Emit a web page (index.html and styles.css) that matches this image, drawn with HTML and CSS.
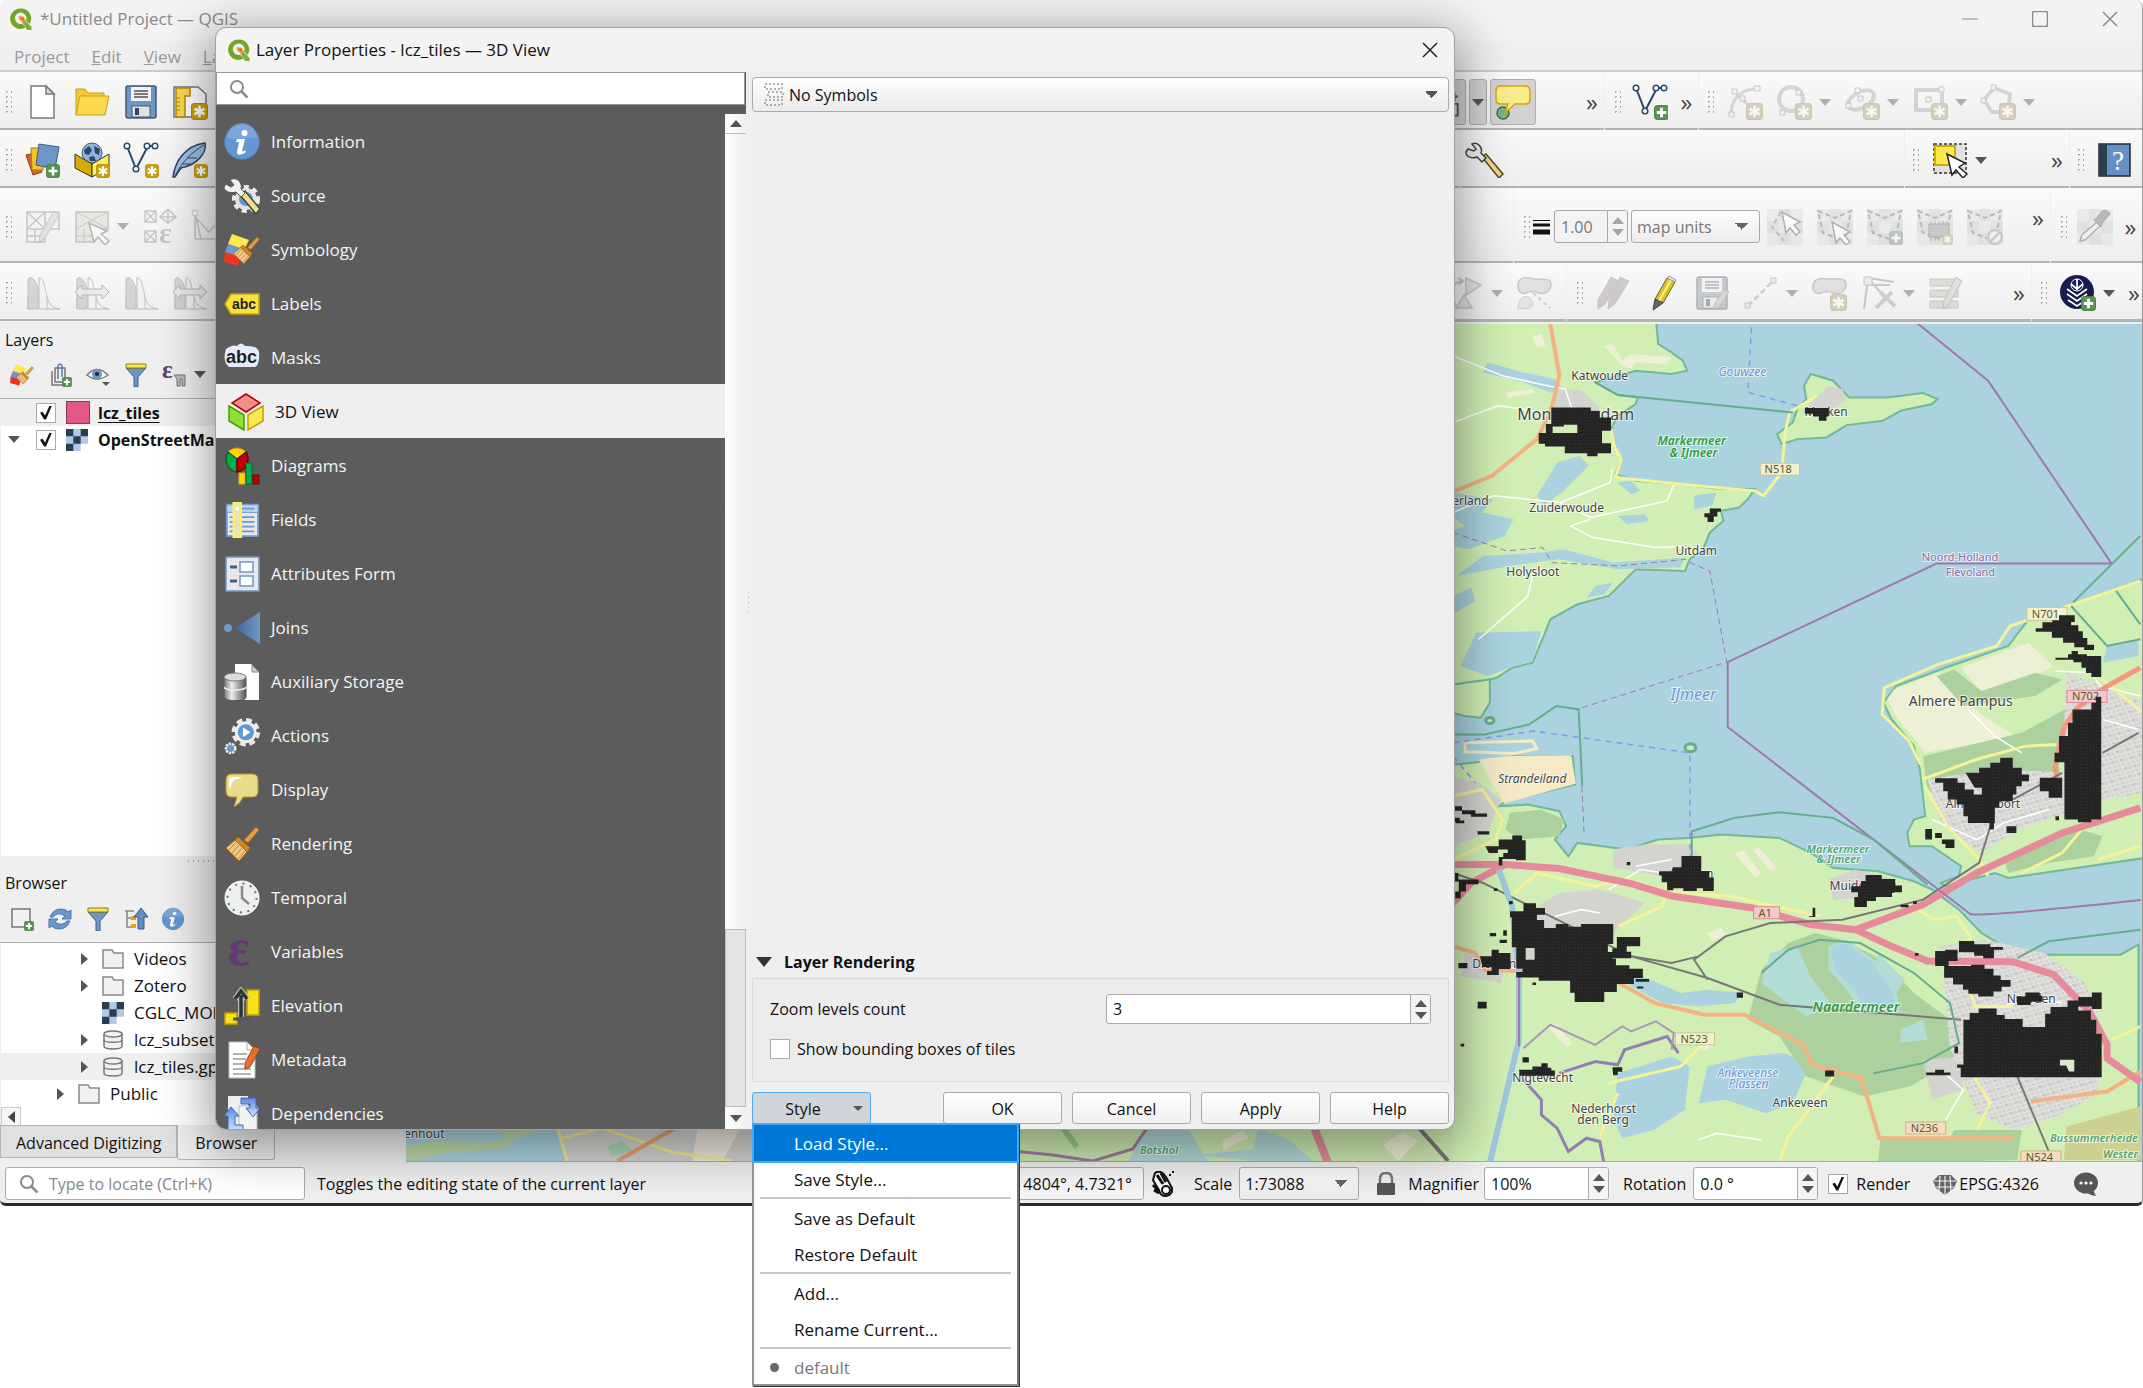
FILE: index.html
```html
<!DOCTYPE html>
<html lang="en">
<head>
<meta charset="utf-8">
<title>Layer Properties</title>
<link rel="stylesheet" href="styles.css">
</head>
<body>
<svg class="sprite" aria-hidden="true">
  <defs>
    <linearGradient id="gJoin" x1="0" y1="0" x2="1" y2="0"><stop offset="0" stop-color="#3d6691"/><stop offset="1" stop-color="#6d97c8"/></linearGradient>
    <linearGradient id="gCyl" x1="0" y1="0" x2="1" y2="0"><stop offset="0" stop-color="#777"/><stop offset=".35" stop-color="#eee"/><stop offset="1" stop-color="#555"/></linearGradient>
    <linearGradient id="gArrow" x1="0" y1="0" x2="0" y2="1"><stop offset="0" stop-color="#5b8be0"/><stop offset="1" stop-color="#d5e4ff"/></linearGradient>
    <pattern id="tiles" width="7" height="10" patternUnits="userSpaceOnUse"><rect width="7" height="10" fill="#232323"/><rect x="3" y="4" width="2" height="2" fill="#484848"/></pattern>
    <pattern id="fieldlines" width="46" height="60" patternUnits="userSpaceOnUse" patternTransform="rotate(24)"><path d="M0 8h46M0 38h46M12 8v30M34 38v30" stroke="#b9dcae" stroke-width="1" fill="none"/><rect x="20" y="14" width="5" height="16" fill="#e2edc6"/></pattern>
    <pattern id="blocks" width="22" height="26" patternUnits="userSpaceOnUse" patternTransform="rotate(-20)"><path d="M0 3h22M5 0v26M0 15h22M16 3v12" stroke="#ececec" stroke-width="2" fill="none"/><rect x="7" y="18" width="6" height="4" fill="#bcbcb8"/></pattern>
  </defs>
  <symbol id="qgis" viewBox="0 0 24 24"><path d="M11.500 1.500a10.200 10.200 0 1 0 5 19l-3.200-3.700a5.800 5.800 0 1 1 3.800-3.500l3.500 3.800A10.200 10.200 0 0 0 11.500 1.500z" fill="#73a52b"/><path d="M12 13l3-1 7.500 8V23h-4.500z" fill="#7fb03a"/><path d="M9.500 9l5 .5 2.500 4-3 2-4-3z" fill="#f0a030"/><path d="M11 10.500l4 .5-.5 3z" fill="#ee5a24"/></symbol>
  <symbol id="star" viewBox="0 0 16 16"><rect x=".5" y=".5" width="15" height="15" rx="3" fill="#c9a20c" stroke="#b28d05"/><path d="M8 2.500v11M3.200 5.200l9.600 5.600M12.800 5.200l-9.600 5.600" stroke="#fff" stroke-width="2.400"/></symbol>
  <symbol id="plus" viewBox="0 0 16 16"><rect x=".5" y=".5" width="15" height="15" rx="3" fill="#589353" stroke="#45803f"/><path d="M8 3v10M3 8h10" stroke="#fff" stroke-width="3"/></symbol>
  <symbol id="new" viewBox="0 0 36 36"><path d="M6 2h15l8 8v24H6z" fill="#fff" stroke="#7a7a7a" stroke-width="1.500"/><path d="M21 2v8h8z" fill="#ddd" stroke="#7a7a7a" stroke-width="1.500"/></symbol>
  <symbol id="open" viewBox="0 0 36 36"><path d="M2 5h9l3 4h16v5H8L2 30z" fill="#f5c83c" stroke="#c9a20c"/><path d="M6 12h29l-4 19H2z" fill="#fcd94f" stroke="#c9a20c"/></symbol>
  <symbol id="save" viewBox="0 0 36 36"><rect x="3" y="2" width="30" height="32" rx="2" fill="#6d97c8" stroke="#415a75" stroke-width="1.500"/><rect x="8" y="3" width="20" height="14" fill="#f2f2f2"/><path d="M11 7h14M11 10h14M11 13h14" stroke="#555" stroke-width="1.300"/><rect x="9" y="22" width="18" height="11" fill="#e2e2e2" stroke="#415a75"/><rect x="12" y="24" width="4" height="7" fill="#2d4766"/></symbol>
  <symbol id="layout" viewBox="0 0 36 36"><path d="M2 3h24l8 7v23H2z" fill="#fff" stroke="#777" stroke-width="1.500"/><path d="M4 4h14v8h-5v21H4z" fill="#fcd94f" stroke="#b28d05" stroke-width="1.500"/><path d="M4 14h4M4 18h4M4 22h4M4 26h4" stroke="#b28d05"/><use href="#star" x="19" y="19" width="17" height="17"/></symbol>
  <symbol id="dsm" viewBox="0 0 36 36"><path d="M1 13l9-2 7 19-9 3z" fill="#d8602c" stroke="#8e3d18"/><path d="M6 6h14l-2 22H7z" fill="#f3c62c" stroke="#a58309"/><path d="M14 2l20 3-4 22-19-4z" fill="#6d97c8" stroke="#3d5b80"/><use href="#plus" x="21" y="22" width="14" height="14"/></symbol>
  <symbol id="gpkg" viewBox="0 0 36 36"><circle cx="18" cy="11" r="10" fill="#8fb4dd" stroke="#415a75"/><path d="M10 8l5-4 3 4-3 5-4-1zM20 4l6 3-1 6-4-2zM15 15l5-1 2 5h-6z" fill="#2d4766"/><path d="M1 12l17 10v13L1 26z" fill="#d9ab00" stroke="#333"/><path d="M18 22l17-10v13L18 35z" fill="#ffef5a" stroke="#333"/><use href="#star" x="22" y="22" width="14" height="14"/></symbol>
  <symbol id="vee" viewBox="0 0 36 36"><path d="M4 4l9 23L25 4h7" fill="none" stroke="#2b4a66" stroke-width="2"/><g fill="#fff" stroke="#2b4a66" stroke-width="1.500"><circle cx="4" cy="4" r="2.800"/><circle cx="13" cy="27" r="2.800"/><circle cx="24" cy="4" r="2.800"/><circle cx="32" cy="4" r="2.800"/></g></symbol>
  <symbol id="veestar" viewBox="0 0 36 36"><use href="#vee"/><use href="#star" x="22" y="22" width="14" height="14"/></symbol>
  <symbol id="veeplus" viewBox="0 0 36 36"><use href="#vee"/><use href="#plus" x="22" y="21" width="15" height="15"/></symbol>
  <symbol id="feather" viewBox="0 0 36 36"><path d="M1 35C3 20 12 4 33 1c2 10-8 22-24 25l-6 9z" fill="#9cc0e6" stroke="#2d4766" stroke-width="1.500"/><path d="M3 34C10 20 20 10 32 3M11 22h8M15 16h10" stroke="#2d4766" fill="none"/><use href="#star" x="22" y="22" width="14" height="14"/></symbol>
  <symbol id="meshpen" viewBox="0 0 36 36"><g fill="#f1f1e8" stroke="#888" stroke-width="1.500"><path d="M2 3h32v17H20v13H2zM2 20h18V3M2 3l18 17M20 3L2 20M2 27h18M10 20v13"/></g><path d="M29 2l5 4-14 23-6 5 1-8z" fill="#d5c5c0" stroke="#888"/></symbol>
  <symbol id="meshsel" viewBox="0 0 36 36"><path d="M2 3h32v17H20v13H2z" fill="#dcd8b4" stroke="#888" stroke-width="1.500"/><path d="M2 3l16 8L34 3M2 20l16-9 16 9M2 27h18M10 20v13" fill="none" stroke="#888"/><path d="M15 14l5 19 4-5 7 8 4-4-8-7 6-3z" fill="#fff" stroke="#666" stroke-width="1.500"/></symbol>
  <symbol id="meshv" viewBox="0 0 36 36"><path d="M4 4l6 26h18L34 4M4 30h28V8M4 30V8l14 15L32 8" fill="none" stroke="#888" stroke-width="1.500"/><circle cx="4" cy="4" r="3" fill="#fff" stroke="#888"/></symbol>
  <symbol id="hist" viewBox="0 0 36 36"><path d="M3 34V4c3-4 9 2 10 12v18z" fill="#9db49a" stroke="#777"/><path d="M14 34V3c5-2 6 13 9 22 2 6 6 8 12 9z" fill="#f2f2f2" stroke="#777"/><path d="M3 22v12M22 22v12" stroke="#c66"/></symbol>
  <symbol id="histarrow" viewBox="0 0 36 36"><use href="#hist"/><path d="M1 17l7-7v4h20v-4l7 7-7 7v-4H8v4z" fill="#ddd" stroke="#666"/></symbol>
  <symbol id="labelt" viewBox="0 0 22 36"><path d="M0 12h14M10 7v10" stroke="#3c6b9a" stroke-width="3"/><path d="M0 20h14v13H0M4 24h6M4 29h6" fill="none" stroke="#555" stroke-width="2"/></symbol>
  <symbol id="tip" viewBox="0 0 36 36"><circle cx="8" cy="29" r="6" fill="#78b47a" stroke="#3b6e44" stroke-width="1.500"/><path d="M6 2h24q5 0 5 5v8q0 5-5 5H20L10 29l3-9H6q-5 0-5-5V7q0-5 5-5z" fill="#faec8d" stroke="#cfa80c" stroke-width="1.500"/></symbol>
  <symbol id="arc" viewBox="0 0 36 36"><path d="M4 31C4 14 14 5 30 5M8 8l12 12" fill="none" stroke="#aaa" stroke-width="3"/><g fill="#eee" stroke="#888"><path d="M2 28h5v5H2zM5 5h5v5H5zM27 2h6v5h-6zM13 12h5v5h-5z"/></g><use href="#star" x="19" y="19" width="17" height="17"/></symbol>
  <symbol id="circ" viewBox="0 0 36 36"><ellipse cx="15" cy="15" rx="12" ry="12" fill="none" stroke="#aaa" stroke-width="4"/><path d="M20 6h5v5h-5zM4 26h5v5H4z" fill="#eee" stroke="#888"/><use href="#star" x="19" y="19" width="17" height="17"/></symbol>
  <symbol id="elli" viewBox="0 0 36 36"><ellipse cx="17" cy="16" rx="14" ry="8" transform="rotate(-28 17 16)" fill="none" stroke="#aaa" stroke-width="4"/><path d="M11 4h5v5h-5zM14 12h5v5h-5zM2 19h5v5H2z" fill="#eee" stroke="#888"/><use href="#star" x="19" y="19" width="17" height="17"/></symbol>
  <symbol id="rect" viewBox="0 0 36 36"><path d="M4 6h26v20H4z" fill="none" stroke="#aaa" stroke-width="4"/><path d="M14 13h5v5h-5zM27 3h5v5h-5z" fill="#eee" stroke="#888"/><use href="#star" x="19" y="19" width="17" height="17"/></symbol>
  <symbol id="poly" viewBox="0 0 36 36"><path d="M14 4l16 6-2 18H12L4 16z" fill="none" stroke="#aaa" stroke-width="4"/><path d="M11 1h5v5h-5zM1 14h5v5H1z" fill="#eee" stroke="#888"/><use href="#star" x="19" y="19" width="17" height="17"/></symbol>
  <symbol id="wrench" viewBox="0 0 40 36"><path d="M17 15l4-3 17 20-4 4z" fill="#f4d97c" stroke="#4a4a33" stroke-width="1.500"/><path d="M1 10l2-3 6 2 2-2-4-5c6-3 11 4 9 9l5 5-4 4-5-5C7 17 1 15 1 10z" fill="#eee" stroke="#444" stroke-width="1.500"/></symbol>
  <symbol id="select" viewBox="0 0 36 36"><rect x="2" y="2" width="32" height="29" fill="#e2e2e2" stroke="#333" stroke-width="1.500" stroke-dasharray="3 2"/><rect x="3" y="4" width="20" height="19" fill="#fce94f" stroke="#cfa80c" stroke-width="2"/><path d="M15 12l5 21 4-5 7 8 4-4-8-7 6-4z" fill="#fff" stroke="#222" stroke-width="1.500"/></symbol>
  <symbol id="width" viewBox="0 0 18 16"><path d="M0 1.500h17" stroke="#111"/><path d="M0 6h17" stroke="#111" stroke-width="3"/><path d="M0 13h17" stroke="#111" stroke-width="5"/></symbol>
  <symbol id="cells" viewBox="0 0 36 36"><path d="M0 0h36v36H0z" fill="#d8dcd9"/><path d="M12 0h12v12H12zM0 12h12v12H0zM24 12h12v12H24zM12 24h12v12H12z" fill="#c4c9c6"/></symbol>
  <symbol id="sk1" viewBox="0 0 36 36"><use href="#cells"/><path d="M14 3L5 18l12 14" fill="none" stroke="#777" stroke-width="2" stroke-dasharray="5 3"/><path d="M15 3l4 21 4-5 6 7 4-3-6-7 6-3z" fill="#fff" stroke="#555" stroke-width="1.500"/></symbol>
  <symbol id="sk0" viewBox="0 0 36 36"><use href="#cells"/><path d="M1 2l17 7 16-7-6 30-22-8z" fill="none" stroke="#666" stroke-width="2" stroke-dasharray="5 3"/></symbol>
  <symbol id="sk2" viewBox="0 0 36 36"><use href="#sk0"/><path d="M15 13l4 21 4-5 6 7 4-3-6-7 6-3z" fill="#fff" stroke="#555" stroke-width="1.500"/></symbol>
  <symbol id="sk3" viewBox="0 0 36 36"><use href="#sk0"/><use href="#plus" x="22" y="22" width="14" height="14"/></symbol>
  <symbol id="sk4" viewBox="0 0 36 36"><use href="#sk0"/><rect x="12" y="15" width="20" height="13" fill="#8a8f98" stroke="#555"/><path d="M14 12v3M18 12v3M22 12v3M26 12v3M30 12v3M14 28v4M18 28v4M22 28v4" stroke="#555"/><use href="#star" x="25" y="25" width="11" height="11"/></symbol>
  <symbol id="sk5" viewBox="0 0 36 36"><use href="#sk0"/><circle cx="28" cy="28" r="7" fill="#eee" stroke="#c08080" stroke-width="2.500"/><path d="M24 32l8-8" stroke="#c08080" stroke-width="2.500"/></symbol>
  <symbol id="dropper" viewBox="0 0 36 36"><use href="#cells"/><path d="M3 32l2-6 15-13 3 4L8 31z" fill="#eee" stroke="#555" stroke-width="1.500"/><path d="M17 11l3-2 5-7q6-2 8 3l-7 8-2 5z" fill="#666" stroke="#444"/></symbol>
  <symbol id="rotate" viewBox="0 0 36 36"><path d="M18 3l15 7-15 10zM16 20l8 13H8z" fill="#ccc" stroke="#888" stroke-width="1.500"/><path d="M8 30C-1 20 3 8 14 6M10 3l5 3-4 4" fill="none" stroke="#888" stroke-width="2"/></symbol>
  <symbol id="simp" viewBox="0 0 36 36"><path d="M2 9c2-9 12-6 17-5s16-2 16 5-6 11-12 9-8-2-13 0S1 15 2 9z" fill="#c5c5c5" stroke="#888" stroke-width="1.500"/><path d="M2 34c0-10 6-14 10-12s7 8 2 11z" fill="#ddd0a8" stroke="#999"/><path d="M17 18l17 15" stroke="#999" stroke-width="2" stroke-dasharray="4 3"/></symbol>
  <symbol id="pencil" viewBox="0 0 36 36"><path d="M22 3l8 4-12 21-8-4z" fill="#ddc02c" stroke="#6b5d17"/><path d="M26 5L14 26" stroke="#fff28a" stroke-width="2"/><path d="M22 3l2-2 7 4-1 2z" fill="#eee" stroke="#999"/><path d="M10 24l8 4-10 7z" fill="#666" stroke="#444"/></symbol>
  <symbol id="pencils" viewBox="0 0 36 36"><path d="M15 2l8 4L9 29l-7 5v-9zM24 2l9 4-14 23-7 5 1-9z" fill="#a48f88" stroke="#887"/></symbol>
  <symbol id="savepen" viewBox="0 0 36 36"><use href="#save"/><path d="M30 14l5 3-9 14-6 4 1-7z" fill="#c5a99a" stroke="#777"/></symbol>
  <symbol id="seg" viewBox="0 0 36 36"><path d="M5 31L30 6" stroke="#999" stroke-width="2.500" stroke-dasharray="6 3"/><path d="M2 28h5v5H2zM28 3h5v5h-5z" fill="#ddd" stroke="#888"/></symbol>
  <symbol id="blob" viewBox="0 0 36 36"><path d="M2 10c2-9 12-6 17-6s16-2 16 5-6 11-12 9-8-2-13 0S1 16 2 10z" fill="#bfc5bd" stroke="#888" stroke-width="1.500"/><use href="#star" x="19" y="19" width="17" height="17"/></symbol>
  <symbol id="vtool" viewBox="0 0 36 36"><path d="M4 34L8 3l26 4M8 3l12 14M8 10h22" fill="none" stroke="#888" stroke-width="2"/><path d="M4 2h8v8H4z" fill="#ddd" stroke="#888"/><path d="M16 33l16-16M20 17l15 14" stroke="#a89c78" stroke-width="4"/></symbol>
  <symbol id="tabpen" viewBox="0 0 36 36"><path d="M2 4h28v7H2zM2 15h28v7H2zM2 26h28v7H2z" fill="#c8bc8c" stroke="#888"/><path d="M28 2l6 4-13 23-6 5 1-8z" fill="#ccc0bb" stroke="#777"/></symbol>
  <symbol id="merg" viewBox="0 0 36 36"><ellipse cx="17" cy="17" rx="17" ry="17" fill="#171b4f"/><path d="M17 4v11M11 9l6 5 6-5M7 14l10 7 10-7M7 19l10 7 10-7M8 25l9 6 9-6" fill="none" stroke="#fff" stroke-width="1.800"/><circle cx="17" cy="10" r="6" fill="none" stroke="#fff"/><use href="#plus" x="21" y="21" width="15" height="15"/></symbol>
  <symbol id="info" viewBox="0 0 36 36"><circle cx="18" cy="18" r="17.500" fill="#6397d0" stroke="#4878b0"/><path d="M3 14a15 15 0 0 1 30 0C23 12 12 17 3 14z" fill="#8ab4e2" opacity=".6"/><circle cx="20.500" cy="9" r="3" fill="#fff"/><path d="M13 15h8l-3 12q1 1 4-1l-1 3q-8 4-8-1l2-10h-3z" fill="#fff"/></symbol>
  <symbol id="source" viewBox="0 0 36 36"><circle cx="22" cy="21" r="9" fill="#6397d0" stroke="#e2e2e2" stroke-width="4"/><circle cx="22" cy="21" r="12" fill="none" stroke="#ececec" stroke-width="4" stroke-dasharray="5 4"/><path d="M16 17l5-4 15 18-4 5z" fill="#f1dc8f" stroke="#4a4a33" stroke-width="1.500"/><path d="M0 9l2-3 5 3 3-2-4-5c6-4 13 2 11 9l4 4-4 4-5-5C6 16 0 13 0 9z" fill="#f0f0f0" stroke="#555"/></symbol>
  <symbol id="brush" viewBox="0 0 36 36"><path d="M32 1l3 3-11 13-4-3z" fill="#e0a04a" stroke="#a76a12"/><path d="M14 11l12 11-3 4L11 14z" fill="#d2862a" stroke="#a76a12"/><path d="M11 14l12 12-8 9L2 22z" fill="#f0c88c" stroke="#a76a12"/><path d="M12 16L5 24M15 19l-7 8M18 22l-7 8M21 25l-7 8" stroke="#bb7f30"/></symbol>
  <symbol id="symb" viewBox="0 0 36 36"><path d="M8 2l17 6-5 10L4 12z" fill="#fce94f"/><path d="M4 12l16 5-4 9L1 20z" fill="#6d97c8"/><path d="M1 20l15 5-2 9L0 30z" fill="#ee3322"/><use href="#brush" x="8" y="1" width="28" height="35"/></symbol>
  <symbol id="cube" viewBox="0 0 36 38"><path d="M18 1l14 9-14 9-14-9z" fill="#f58c8c" stroke="#b00000" stroke-width="1.500"/><path d="M1 13l15 9v15L1 28z" fill="#8ae234" stroke="#4e9a06" stroke-width="1.500"/><path d="M35 13l-15 9v15l15-9z" fill="#fce94f" stroke="#c4a000" stroke-width="1.500"/></symbol>
  <symbol id="diag" viewBox="0 0 36 38"><path d="M13 12L4 5a12 12 0 0 1 18 0z" fill="#ffd500" stroke="#c9860c"/><path d="M13 12v13A12 13 0 0 1 4 5z" fill="#00b050" stroke="#155e30" stroke-width="1.500"/><path d="M13 12v13A12 13 0 0 0 22 5z" fill="#c00000" stroke="#5e0a0a" stroke-width="1.500"/><path d="M15 26h6v11h-6z" fill="#ffd500" stroke="#f0a020"/><path d="M22 16h6v21h-6z" fill="#00b050" stroke="#155e30"/><path d="M29 28h6v9h-6z" fill="#c00000" stroke="#5e0a0a"/></symbol>
  <symbol id="fields" viewBox="0 0 36 40"><path d="M2 4h33v33H2z" fill="#e8e8e8" stroke="#6d97c8" stroke-width="2"/><path d="M2 4h33v8H2z" fill="#bad8f0" stroke="#6d97c8"/><path d="M16 8h15M5 17h26M5 22h26M5 27h26M5 32h26" stroke="#6d97c8" stroke-width="2"/><path d="M9 2h8v36H9z" fill="#ece3b4" stroke="#fdf35a" stroke-width="2"/><circle cx="13" cy="8" r="2" fill="#fff"/></symbol>
  <symbol id="form" viewBox="0 0 36 36"><path d="M2 1h33v34H2z" fill="#e8e8e8" stroke="#6d97c8" stroke-width="1.500"/><path d="M16 6h13v10H16zM16 20h13v10H16z" fill="#fff" stroke="#6d97c8" stroke-width="1.500"/><path d="M6 11h7M6 25h7" stroke="#41607f" stroke-width="3"/></symbol>
  <symbol id="joins" viewBox="0 0 36 36"><circle cx="4" cy="18" r="4" fill="#6d97c8"/><path d="M36 2v32L11 18z" fill="url(#gJoin)"/></symbol>
  <symbol id="aux" viewBox="0 0 36 38"><path d="M11 1h16l8 8v28H11z" fill="#fff"/><path d="M28 2v7h7z" fill="#ccc" stroke="#888"/><path d="M0 14v20c0 5 22 5 22 0V14z" fill="url(#gCyl)" stroke="#555"/><ellipse cx="11" cy="14" rx="11" ry="4" fill="#ddd" stroke="#777"/><path d="M0 24c1 4 21 4 22 0" fill="none" stroke="#eee" stroke-width="1.500"/></symbol>
  <symbol id="actions" viewBox="0 0 36 40"><circle cx="22" cy="16" r="12.500" fill="none" stroke="#e8e8e8" stroke-width="5" stroke-dasharray="6 3.800"/><circle cx="22" cy="16" r="10" fill="#6397d0" stroke="#eee" stroke-width="3"/><path d="M19 11v10l8-5z" fill="#fff"/><circle cx="6" cy="33" r="5" fill="#6d97c8" stroke="#eee" stroke-width="2.500" stroke-dasharray="2.500 1"/></symbol>
  <symbol id="display" viewBox="0 0 36 36"><path d="M8 2h20q6 0 6 6v11q0 6-6 6H19q-2 6-9 10l3-10H8q-6 0-6-6V8q0-6 6-6z" fill="#e8dc8a" stroke="#b89a20"/><path d="M5 16V9q0-4 4-4h9l-4 2q-6 0-7 8z" fill="#fff"/></symbol>
  <symbol id="clock" viewBox="0 0 36 36"><circle cx="18" cy="18" r="17" fill="#eff0ee" stroke="#fff" stroke-width="1"/><circle cx="18" cy="18" r="14.500" fill="none" stroke="#4b77ad" stroke-width="2" stroke-dasharray="2 5.600"/><path d="M18 6v12l7 6" fill="none" stroke="#888" stroke-width="2.500"/></symbol>
  <symbol id="elev" viewBox="0 0 36 38"><path d="M23 3h12v25H23zM1 26h12v11H1z" fill="#f7e017" stroke="#c4a000" stroke-width="1.500"/><path d="M17 30V8M11 12l6-8 6 8" fill="none" stroke="#bbb" stroke-width="6"/><path d="M17 30V8M11 12l6-8 6 8" fill="none" stroke="#2e3436" stroke-width="3.500"/><path d="M9 32h17" stroke="#555" stroke-width="3"/></symbol>
  <symbol id="meta" viewBox="0 0 36 38"><path d="M5 1h18l8 8v28H5z" fill="#fff" stroke="#bbb"/><path d="M23 1v8h8" fill="none" stroke="#aaa"/><path d="M9 13h14M9 18h13M9 23h11M9 28h18M9 33h18" stroke="#999" stroke-width="1.500"/><path d="M30 5l6 3-10 18-5 2v-6z" fill="#e8702c" stroke="#9c4412"/></symbol>
  <symbol id="deps" viewBox="0 0 36 38"><path d="M4 1h20v36H4z" fill="#eee"/><path d="M15 11h18v26H15z" fill="#f3f3f3" stroke="#bbb"/><path d="M17 3h15v10h4l-7 9-7-9h4V9h-9z" fill="url(#gArrow)" stroke="#3a66b8"/><path d="M7 12l8 9h-4v9h8v7H4V21H0z" fill="url(#gArrow)" stroke="#3a66b8"/></symbol>
  <symbol id="search" viewBox="0 0 20 20"><circle cx="8" cy="8" r="6" fill="none" stroke="#8a8a8a" stroke-width="2"/><path d="M12.500 12.500l6 6" stroke="#8a8a8a" stroke-width="2.500"/></symbol>
  <symbol id="nosym" viewBox="0 0 20 24"><path d="M1 1h17v5H1zM4 9h15v5H4zM1 17h17v5H1z" fill="none" stroke="#999" stroke-width="1.500" stroke-dasharray="2 2"/></symbol>
  <symbol id="group" viewBox="0 0 24 24"><path d="M4 8v14h12M7 5v14h10V5z" fill="none" stroke="#777" stroke-width="1.500"/><path d="M10 16V3q2-4 4 0v11" fill="none" stroke="#5d7ea8" stroke-width="1.500"/><use href="#plus" x="14" y="14" width="10" height="10"/></symbol>
  <symbol id="eye" viewBox="0 0 24 24"><path d="M1 12Q11 1 22 12 11 20 1 12z" fill="#fff" stroke="#777" stroke-width="1.500"/><circle cx="11" cy="11" r="5" fill="#6d97c8"/><circle cx="11" cy="11" r="2" fill="#223"/><path d="M16 19h8l-4 4z" fill="#555"/></symbol>
  <symbol id="filter" viewBox="0 0 24 24"><path d="M2 5l8 9v10h4V14l8-9z" fill="#6d97c8" stroke="#41607f"/><path d="M2 1h20v4H2z" fill="#fce94f" stroke="#8a7a10"/></symbol>
  <symbol id="raster" viewBox="0 0 21 21"><path d="M0 0h21v14h-7v7H0z" fill="#b0c9e6"/><path d="M0 0h7v7H0zM14 0h7v7h-7zM7 7h7v7H7zM0 14h7v7H0z" fill="#2b3e50"/></symbol>
  <symbol id="addbox" viewBox="0 0 24 24"><path d="M2 2h18v18H2z" fill="#f1f1f1" stroke="#777" stroke-width="1.500"/><use href="#plus" x="14" y="14" width="10" height="10"/></symbol>
  <symbol id="refresh" viewBox="0 0 24 24"><path d="M2 10Q5 2 13 2q5 0 7 3l3-2v9h-9l3-3q-7-5-12 1zM22 14q-3 8-11 8-5 0-7-3l-3 2v-9h9l-3 3q7 5 12-1z" fill="#6d97c8" stroke="#4878b0"/></symbol>
  <symbol id="collapse" viewBox="0 0 24 24"><path d="M1 4h9M3 4v16h6M3 11h6" fill="none" stroke="#888" stroke-width="1.500"/><path d="M7 9h5v4H7zM7 17h5v4H7z" fill="#f90"/><path d="M14 22V10h-4l7-9 7 9h-4v12z" fill="#5f8dc0" stroke="#36597f"/></symbol>
  <symbol id="folder" viewBox="0 0 22 22"><path d="M1 2h9l2 3h9v15H1z" fill="#f1f1f1" stroke="#888" stroke-width="1.500"/></symbol>
  <symbol id="db" viewBox="0 0 22 22"><path d="M2 5v12c0 4 18 4 18 0V5" fill="#f1f1f1" stroke="#777" stroke-width="1.500"/><ellipse cx="11" cy="5" rx="9" ry="3" fill="#f1f1f1" stroke="#777" stroke-width="1.500"/><path d="M2 11c0 3 18 3 18 0" fill="none" stroke="#777" stroke-width="1.500"/></symbol>
  <symbol id="mouse" viewBox="0 0 24 26"><path d="M4 2q6-4 11 4l6 11q1 7-6 8-6 0-7-6L2 9z" fill="#fff" stroke="#111" stroke-width="2"/><path d="M6 4l6 9M10 2l5 9M2 14l6 6M3 19l5 3" stroke="#111" stroke-width="3"/><circle cx="15" cy="19" r="4" fill="none" stroke="#111" stroke-width="2"/><path d="M18 4h2M21 1h2" stroke="#111" stroke-width="2"/></symbol>
  <symbol id="lock" viewBox="0 0 20 24"><path d="M4 12V7q0-6 6-6t6 6v5" fill="none" stroke="#777" stroke-width="2.500"/><rect x="1" y="11" width="18" height="12" rx="1" fill="#555"/></symbol>
  <symbol id="globe" viewBox="0 0 24 22"><path d="M6 2h12l6 6-3 7-9 7-9-7L0 8z" fill="#666"/><path d="M1 8h22M3 14h18M12 3v19M7 3L6 18M17 3l1 15" stroke="#f0f0f0" stroke-width="1.200"/></symbol>
  <symbol id="bubble" viewBox="0 0 24 24"><path d="M8 19q5 1 9 4l5 1-3-6" fill="#555"/><ellipse cx="12" cy="11" rx="12" ry="10.500" fill="#555"/><circle cx="7" cy="11" r="1.600" fill="#fff"/><circle cx="12" cy="11" r="1.600" fill="#fff"/><circle cx="17" cy="11" r="1.600" fill="#fff"/></symbol>
</svg>

<div class="win">
  <header class="titlebar">
    <svg class="i24"><use href="#qgis"/></svg><span>*Untitled Project — QGIS</span>
    <div class="winbtns">
      <button aria-label="Minimize"><svg viewBox="0 0 16 16"><path d="M0 8h16" stroke="#8a8a8a"/></svg></button>
      <button aria-label="Maximize"><svg viewBox="0 0 16 16"><rect x=".5" y=".5" width="15" height="15" rx="2" fill="none" stroke="#8a8a8a" stroke-width="1.500"/></svg></button>
      <button aria-label="Close"><svg viewBox="0 0 16 16"><path d="M1 1l14 14M15 1L1 15" stroke="#8a8a8a" stroke-width="1.500"/></svg></button>
    </div>
  </header>
  <nav class="menubar"><a href="#">Project</a><a href="#"><u>E</u>dit</a><a href="#"><u>V</u>iew</a><a href="#"><u>L</u>a</a></nav>

  <div class="row r1">
    <div class="tbar grow"><i class="grip"></i><button class="tb"><svg><use href="#new"/></svg></button><button class="tb"><svg><use href="#open"/></svg></button><button class="tb"><svg><use href="#save"/></svg></button><button class="tb"><svg><use href="#layout"/></svg></button></div>
    <div class="tbar w160"><button class="tgl t22"><svg><use href="#labelt"/></svg></button><button class="tgl t16"><i class="dn"></i></button><button class="tgl t46"><svg><use href="#tip"/></svg></button><span class="more">»</span></div>
    <div class="tbar w93"><i class="grip"></i><button class="tb"><svg><use href="#veeplus"/></svg></button><span class="more">»</span></div>
    <div class="tbar w444 off"><i class="grip"></i><button class="tb"><svg><use href="#arc"/></svg></button><button class="tb"><svg><use href="#circ"/></svg><i class="dn"></i></button><button class="tb"><svg><use href="#elli"/></svg><i class="dn"></i></button><button class="tb"><svg><use href="#rect"/></svg><i class="dn"></i></button><button class="tb"><svg><use href="#poly"/></svg><i class="dn"></i></button></div>
  </div>
  <div class="row r2">
    <div class="tbar grow"><i class="grip"></i><button class="tb"><svg><use href="#dsm"/></svg></button><button class="tb"><svg><use href="#gpkg"/></svg></button><button class="tb"><svg><use href="#veestar"/></svg></button><button class="tb"><svg><use href="#feather"/></svg></button></div>
    <div class="tbar w444 wr"><button class="tb"><svg class="wide"><use href="#wrench"/></svg></button></div>
    <div class="tbar w164"><i class="grip"></i><button class="tb"><svg><use href="#select"/></svg><i class="dn"></i></button><span class="more">»</span></div>
    <div class="tbar w73"><i class="grip"></i><button class="tb"><svg viewBox="0 0 36 36"><rect x="2" y="2" width="31" height="32" fill="#6590c5" stroke="#1d2b3a" stroke-width="1.500"/><rect x="2" y="2" width="8" height="32" fill="#2b3e50"/><text x="15" y="28" class="q">?</text></svg></button></div>
  </div>
  <div class="row r3">
    <div class="tbar grow off"><i class="grip"></i><button class="tb"><svg><use href="#meshpen"/></svg></button><button class="tb"><svg><use href="#meshsel"/></svg><i class="dn"></i></button><button class="tb"><svg viewBox="0 0 36 36"><path d="M3 2h11v11H3zM3 22h11v11H3zM3 2l11 11M14 2L3 13M3 22l11 11M14 22L3 33M26 0l8 8-8 6-8-6zM18 8h16M26 0v14" fill="none" stroke="#888" stroke-width="1.500"/><text x="17" y="34" class="eps e3">ε</text></svg></button><button class="tb"><svg><use href="#meshv"/></svg></button></div>
    <div class="tbar w536 tight"><i class="grip"></i><svg class="wd"><use href="#width"/></svg><span class="spin dis"><input class="sp1" aria-label="Stroke width" value="1.00" disabled><i class="ud"></i></span><select class="sel units" aria-label="Units" disabled><option>map units</option></select>
      <div class="icons off"><button class="tb"><svg><use href="#sk1"/></svg></button><button class="tb"><svg><use href="#sk2"/></svg></button><button class="tb"><svg><use href="#sk3"/></svg></button><button class="tb"><svg><use href="#sk4"/></svg></button><button class="tb"><svg><use href="#sk5"/></svg></button></div><span class="more up">»</span></div>
    <div class="tbar w92"><i class="grip"></i><button class="tb faded"><svg><use href="#dropper"/></svg></button><span class="more">»</span></div>
  </div>
  <div class="row r4">
    <div class="tbar grow off"><i class="grip"></i><button class="tb"><svg><use href="#hist"/></svg></button><button class="tb"><svg><use href="#histarrow"/></svg></button><button class="tb"><svg><use href="#hist"/></svg></button><button class="tb"><svg><use href="#histarrow"/></svg></button></div>
    <div class="tbar w118 off"><button class="tb"><svg><use href="#rotate"/></svg><i class="dn"></i></button><button class="tb"><svg><use href="#simp"/></svg></button></div>
    <div class="tbar w464 off"><i class="grip"></i><button class="tb"><svg><use href="#pencils"/></svg></button><button class="tb on"><svg><use href="#pencil"/></svg></button><button class="tb"><svg><use href="#savepen"/></svg></button><button class="tb"><svg><use href="#seg"/></svg><i class="dn"></i></button><button class="tb"><svg><use href="#blob"/></svg></button><button class="tb"><svg><use href="#vtool"/></svg><i class="dn"></i></button><button class="tb"><svg><use href="#tabpen"/></svg></button><span class="more">»</span></div>
    <div class="tbar w111"><i class="grip"></i><button class="tb"><svg><use href="#merg"/></svg><i class="dn"></i></button><span class="more">»</span></div>
  </div>

  <main class="main">
    <aside class="dock">
      <h2>Layers</h2>
      <div class="ptools"><svg><use href="#symb"/></svg><svg><use href="#group"/></svg><svg><use href="#eye"/></svg><svg><use href="#filter"/></svg><svg viewBox="0 0 24 24"><text x="0" y="15" class="eps e1">ε</text><path d="M12 12h11v11h-3v-7h-2v7h-3v-7z" fill="#bbb" stroke="#777"/></svg><i class="dn"></i></div>
      <div class="tree layers">
        <div class="trow hl"><i class="exp"></i><input type="checkbox" checked aria-label="lcz_tiles"><span class="swatch"></span><b class="ul">lcz_tiles</b></div>
        <div class="trow"><i class="exp"><i class="dn"></i></i><input type="checkbox" checked aria-label="OpenStreetMap"><svg><use href="#raster"/></svg><b>OpenStreetMap</b></div>
      </div>
      <div class="split"></div>
      <h2 class="h2b">Browser</h2>
      <div class="ptools"><svg><use href="#addbox"/></svg><svg><use href="#refresh"/></svg><svg><use href="#filter"/></svg><svg><use href="#collapse"/></svg><svg class="inf"><use href="#info"/></svg></div>
      <div class="tree browse">
        <div class="trow deep"><i class="rt"></i><svg><use href="#folder"/></svg><span>Videos</span></div>
        <div class="trow deep"><i class="rt"></i><svg><use href="#folder"/></svg><span>Zotero</span></div>
        <div class="trow deep"><i class="rt none"></i><svg><use href="#raster"/></svg><span>CGLC_MODIS</span></div>
        <div class="trow deep"><i class="rt"></i><svg><use href="#db"/></svg><span>lcz_subset.gpkg</span></div>
        <div class="trow deep hl"><i class="rt"></i><svg><use href="#db"/></svg><span>lcz_tiles.gpkg</span></div>
        <div class="trow mid"><i class="rt"></i><svg><use href="#folder"/></svg><span>Public</span></div>
        <div class="hscroll"><i class="lt"></i></div>
      </div>
      <div class="tabs"><button>Advanced Digitizing</button><button class="cur">Browser</button></div>
    </aside>
    <section class="canvas">
      <svg viewBox="406 325 1737 836" preserveAspectRatio="xMaxYMin slice" role="img" aria-label="Map">
        <rect x="406" y="325" width="1737" height="836" fill="#aad3df"/>
        <g class="m" transform="translate(1440 320) scale(.4484 .3333)">
          <g id="land" fill="#cdebb0" stroke="#6fb596" stroke-width="2">
            <path d="M-10 0H485l5 75 30 25 25 25 10 30-35 10-80-10-90 35 50 38 45 7-5 20-40 35-15 40 7 50 16 40-13 45 45 20 100 10 80 13 85 2-15 30-20 25-40 10 5 30-30 35-15 50-30 30-10 35-110-5-30 40-30 40-70 25-60 45-15 50-25 80-45 15-35 30-97 35H-10z"/>
            <path d="M-10 1105l70-15 55-10v70l-20 45-35-5-70-25z"/>
            <path d="M830 165l50 20 35 50h85l80-13 32 18-12 15-70 20-40 30-80 13-45 37-65 5-35 15-10-30 35-35 10-40 20-30-5-40z"/>
            <path d="M1600 765l-195 95-90 40-45 80-140 65-110 55-28 50 18 50 50 80 13 70 12 140-25 10-15 40 5 40h50l65 60-5 30-40 20 10 10 40-15 70-25 30 15 330-65z"/>
            <path d="M-10 1340l90-10 90-20h130l5 85-155 50-15 15 65-5 70 20 15 45-25 40 30 50 20-40 110 20 70-30 70-5 70-10 130 10 70 45 50 45 100 10 80 30 40 25 60 60 50 70 80 65h230l40-30V2540H-10z"/>
          </g>
          <use href="#land" class="lines"/>
          <g fill="#aad3df">
            <path d="M33 520l90 20-25 40 70 20-20 50-80 40-68-20v-20l60-30-60-60zM110 130l80 30 70 20 20 30-30 10-70-35-80-25zM265 430l50-20 20 30-60 80-40 40-15-30zM85 940l145-5-20 90-50 20-50 25-60-30zM280 690l110 40 160-15-10 30-140 5-130-30-110 20-120 30 60-60 130-10zM570 530l50-10-10 40-40 10zM400 490l30-5 20 30-20 10zM400 590l60-5 10 20-50 10zM350 800l40-10-20 35-40 10zM33 830l40-25 10 40-50 40z"/>
            <path d="M870 1880l40-20 60 60 50 90 10 70-90-10-30-60-40-60zM1030 2130l50-30 10 60-60 10zM400 2260l120-50 40 30-10 130-70 60-70 25-20-60zM600 2240l90-30 80-10 60 30-40 120-60 30-90-40-60 10zM860 2160l60-10 60 50-70 30zM1490 980l70-20v50l-80 20zM1290 2010l60-20 20 40-60 20zM380 1940l60 20 100 60 60-10 80 10-20 30-80 10-80-10-70-50z"/>
          </g>
          <g fill="#eef0d5"><path d="M1000 1140l15-30 100-50 90 120 80 70-200 50-60-100zM1165 1045l150-75 55 70-40 30-120 48zM370 80l20-5 20 50 20-20 90 10-10 20-70-5-10 20-20-10zM210 50l20-5 10 35-20 5zM150 220l60-10 5 12-60 14zM660 1600l20-8 40 70-15 10zM700 1590l15-5 40 60-15 8zM560 2140l50 40-15 12-50-40zM260 2110l40 60-15 12-40-60zM600 1840l30-15 10 20-30 20z"/></g>
          <path d="M90 1320l60-10 145-3 12 85-160 60z" fill="#f5e9c6"/>
          <path d="M60 1270l150-5 10 22-50 15-110-5z" fill="none" stroke="#f5e9c6" stroke-width="3"/>
          <g fill="#add19e"><path d="M1080 1310l220-70 110-80 50 80-80 80 10 80-300 20zM1110 1070l40-20 60 65 120-55 60 20-60 50-160 30zM160 1480l70-10 50 30-10 50-90 10-30-30zM720 1950l60-80 60-30 60 20 90 60 70 100 100 100 10 90-120 90-100 30-130-60-60-120-70-50z"/><path d="M1150 2430h150l-10 90-310 10 5-80 150 10zM1260 1620l60-40 110-50 50 20-20 60-100 20-90 30z"/></g>
          <path d="M870 1880l40-20 60 60 50 90 10 70-90-10-30-60-40-60zM1030 2130l50-30 10 60-60 10zM740 1900l60-20 30 90 50 90-60 30-60-60-40-40zM980 1900l60 80-20 40-50-80z" fill="#b2dcd6"/>
          <path d="M875 1885l30-15 60 55 45 85 10 60-70-5-25-60-40-55z" fill="#aad3df"/>
          <path d="M1400 2420l164-60v160h-170z" fill="#cdd08f"/>
          <g fill="#d3d3d0" class="town">
            <path d="M260 205l60 10 40 50-20 40-80-40zM870 200l30 10 10 30-50 50-50-10 20-30zM1400 1060l60 30 110 60v270l-90 20-90-100zM1090 1380l150-30 180 10 20 100-150 70-80 70-90-90zM170 1800l100-80 90-10 100 40-70 90-120 20-40 90-70-10zM390 1590l70-15 100 0 30 50-20 60-180-40zM870 1680l60-30 90 30-30 50-110 10zM1120 1880l100-20 130 40 90 90 30 90v240l-90 70-100 40-80-50-60-200zM30 1370l60 20 50 50-30 100-80 40zM60 1900l90 30-10 60-90-20zM1080 2220l80-10 10 100-70 30z"/>
          </g>
          <path d="M1400 1060l60 30 110 60v270l-90 20-90-100zM1090 1380l150-30 180 10 20 100-150 70-80 70-90-90zM1120 1880l100-20 130 40 90 90 30 90v240l-90 70-100 40-80-50-60-200z" fill="url(#blocks)"/>
          <g fill="none" stroke="#fff" stroke-width="1.500">
            <path d="M33 110l110 60 100 30 40 10 15 60M33 310l100-50 110 20M33 580l90-50 150 20 110-60 5-40M270 550l70 45 170-50 15-50M295 620l50 35 140 30 70-5M340 600l-45 20M210 770l-10 60-110 130M1375 1055l80 5 20 40 90 30M1180 1170l60 80 60 50M1100 1500l100 60 60-50 100-40M1480 1200l80 30M380 1710l70-60 150 30M1120 2250l50 60-40 90M1260 2060l60-30 70 20M520 1620l-80 20M260 1790l60-20 40 10M580 2460l40-20 100 20"/>
          </g>
          <g fill="none" stroke="#f4f29a" stroke-width="3">
            <path d="M385 330l7 50 16 40-13 55 145 20 165 20 20 15 40-70 8-120 10-60 60-50M1564 785l-160 75-130 60-30 60-130 55-120 70-5 80 60 80 25 70M1085 1400l50 120 70 100 20 50M1078 1380l120-60 110-40 70-5M1300 1660l90-60 50-80M33 1430l65-20 45 90-15 60-95 60M170 1720l50-60 130 40 70-20 100 40 130 10 200 60M400 1820l100-60 10-60M380 2290l160-50 60-80M400 2320l-40 130M880 2270l-100 180-20 80M1190 2060l90 0M1170 2220l60 130-30 80M1480 1080l90 100M1470 1620l94-40M1150 1900l50 170M1500 2160l64-40M1045 1750l60 50 50-10 30 60-20 50"/>
          </g>
          <g fill="none" stroke="#f5b183" stroke-width="4">
            <path d="M248 0l22 170-20 110-30 80-100 110-90 50M33 1880l50 20 20 50 200 10 100 30 80 60 110 35h90l130 90 20 60 110 40 40 180h300M1320 2345l170-30 74-60"/>
            <path d="M1564 1045l-80 60-60 60-30 60-20 120 10 60" stroke="#f3987e" stroke-width="5"/>
          </g>
          <g fill="none" stroke="#e68a9c" stroke-width="7">
            <path d="M33 1635h117l120 12 160 45 90 37 180 36 130 50 100 15 80 50 80 44 190 2 90 38 80 110 40 100v42l74 70M930 1830l150-75 120-95 190-120 174-75M33 1750l40-60 77-55"/>
          </g>
          <g fill="none" stroke="#777" stroke-width="2">
            <path d="M33 1660l67 30 330 220 170 65 160 80 405 45M1230 1520l-25 110-125 110-180 60-160 10-100 40-70 70 30 60M430 1910l90 20 60-20M1290 2270l75 240M1280 1440l110-80M1480 1300l80-60M0 2480l30 40"/>
          </g>
          <g fill="none" stroke="#9fc7dc" stroke-width="6"><path d="M135 1650l30 110 15 200v200l-65 370"/></g>
          <g fill="none" stroke="#8f7fb4" stroke-width="3"><path d="M190 2280l40 60v45l35 40 25 70 40-40 30 10 10 70M270 2260l80-35 50 10 15-45 95-40 25 50"/><path d="M190 2185l60-70 100 60 60-55 20 15 55-30 40 35-5 50" stroke="#a99ab8" stroke-width="2"/></g>
          <g fill="none" stroke="#a07aa5" stroke-width="2">
            <path d="M1065 10l160 175 275 548h-390L645 1028v195l540 560q20 10 380-42M180 1960v220"/>
            <path d="M560 730l45 25 38 273-330 140M33 640l120 55 80-10 20 45 150 10 150-20M320 1400l5 140" stroke-dasharray="6 4" stroke-width="1"/>
          </g>
          <g fill="none" stroke="#67ad8d" stroke-width="2">
            <path d="M350 190l50 38 390 52M33 1245h70l100-30 60-55 50 10 8 230M1564 650l-150 200M565 1620v-85l95-40 100-17 120 17 90 65 120 135M1510 815l54 100M1410 860l80 120 74-20M720 1960l60-70 70-30 90 10 120 90 80 90 20 120-80 60-110 30M1290 1915l70-50 204-35"/>
          </g>
          <circle cx="562" cy="1285" r="12" fill="#cdebb0" stroke="#67ad8d" stroke-width="3"/>
          <circle cx="115" cy="1203" r="9" fill="#cdebb0" stroke="#67ad8d" stroke-width="3"/>
          <g fill="none" stroke="#8b95ee" stroke-width="1.500" stroke-dasharray="6 5"><path d="M698 25l-8 195 110 40M33 1270l180-35 348 65v320M33 1310l50 80"/></g>
        </g>
        <g class="strip">
          <path d="M406 1125h350v40H406z" fill="#d3d3d0"/><path d="M406 1125h155l8 36H406z" fill="#aad3df"/>
          <path d="M406 1147l30-6 50 2 40-8-20 14-60 4-30 8-10-4zM500 1130l30-3 10 5-30 6z" fill="#bfd9a8"/>
          <path d="M1015 1125h440v40h-440z" fill="#cdebb0"/><path d="M700 1130l25-5h20l-20 36h-30z" fill="#efe9dd"/>
          <path d="M610 1146l15-5 10 10-20 5z" fill="#a5d8b8"/>
          <path d="M1150 1129h40l20 32h-80zM1260 1129l30 10 25 22h-60l-60-6 60-6z" fill="#b2d8d8"/>
          <path d="M1225 1140l20-10 5 8-25 12zM1385 1145l20-14 15 10-20 20z" fill="#eef0d5"/>
          <g fill="none"><path d="M560 1127l10 34M565 1138l40-10 70 24 60 9" stroke="#f1ee8e" stroke-width="3"/><path d="M680 1127l-60 34" stroke="#e8a070" stroke-width="4"/><path d="M1150 1127l-15 22-40 12-40-6-40-4" stroke="#a07aa5" stroke-width="3"/><path d="M1316 1127l14 36" stroke="#e68a9c" stroke-width="8"/><path d="M1420 1127l30 34" stroke="#777" stroke-width="4"/><path d="M1065 1127l14 20" stroke="#9cc98a" stroke-width="6"/></g>
        </g>
        <g class="lbl">
          <text x="1573" y="381">Katwoude</text><text x="1519" y="421" class="big">Monnickendam</text><text x="1806" y="417">Marken</text><text x="1454" y="506">erland</text><text x="1531" y="513">Zuiderwoude</text><text x="1677" y="556">Uitdam</text><text x="1508" y="577">Holysloot</text><text x="1910" y="707" class="mid">Almere Pampus</text>
          <text x="1500" y="783" class="it">Strandeiland</text><text x="1947" y="808">Almere Poort</text><text x="1672" y="878">Muiden</text><text x="1831" y="890">Muiderberg</text><text x="1474" y="968">Diemen Zuidoost</text><text x="2008" y="1003">Naarden</text><text x="1514" y="1082">Nigtevecht</text><text x="1573" y="1113">Nederhorst</text><text x="1579" y="1124">den Berg</text><text x="1774" y="1107">Ankeveen</text><text x="407" y="1138">enhout</text>
          <g class="wat"><text x="1720" y="377">Gouwzee</text><text x="1672" y="701" class="big">IJmeer</text><text x="1719" y="1077">Ankeveense</text><text x="1730" y="1088">Plassen</text></g>
          <g class="nat"><text x="1659" y="446">Markermeer</text><text x="1671" y="458">&amp; IJmeer</text><text x="1808" y="853" class="lt2">Markermeer</text><text x="1818" y="863" class="lt2">&amp; IJmeer</text><text x="1814" y="1012" class="mid">Naardermeer</text><text x="2051" y="1142" class="lt2">Bussummerheide</text><text x="2104" y="1158" class="lt2">Wester</text><text x="1142" y="1154" class="lt2">Botshol</text></g>
          <g class="adm"><text x="1923" y="562">Noord-Holland</text><text x="1947" y="577">Flevoland</text></g>
          <g class="ref"><rect x="1762" y="464" width="39" height="12"/><text x="1766" y="474">N518</text><rect x="2028" y="608" width="40" height="13"/><text x="2033" y="619">N701</text><rect x="1677" y="1033" width="39" height="12"/><text x="1682" y="1043">N523</text></g>
          <g class="ref o"><rect x="1907" y="1122" width="40" height="12"/><text x="1912" y="1132">N236</text><rect x="2022" y="1151" width="40" height="12"/><text x="2027" y="1161">N524</text></g>
          <g class="ref r"><rect x="2068" y="691" width="40" height="12"/><text x="2073" y="701">N702</text><rect x="1755" y="907" width="26" height="12"/><text x="1760" y="917">A1</text></g>
        </g>
        <g class="m" transform="translate(1440 320) scale(.4484 .3333)">
          <g fill="url(#tiles)">
            <path d="M252 265h88v10h20v20h25v40h-20v37h20v30h-30v9h-23v-9h-50v-20h-44v-8h-14v-32h16v-27h12zM255 322v20h55v-25h-30v5zM817 267h53v25h-5v13h-17v-13h-13v-8h-18zM605 568h25v10h-8v14h-8v16h-14v-14h-7v-12h12z" fill-rule="evenodd"/>
            <path d="M1383 888h35v20h-8v10h16v18h10v20h10v20h15v16h-22v-8h-22v-14h-25v-15h-25v-18h-36v-10h15v-18h22v-6h15zM1375 1015h28v-10h8v-10h14v10h20v5h32v63h-22v-12h-12v-16h-10v-16h-18v-8h-40z"/>
            <path d="M1477 1132v368h-22v8h-30v-8h-30v-172h-22v-28h10v-50h20v-40h10v-40h42v-20h10v-18zM1340 1375h50v60h-30v-20h-20z"/>
            <path d="M1175 1360h30v-15h25v-15h22v-15h28v30h20v20h16v20h-16v15h-12v25h-8v20h-30v20h-10v45h-60v-20h-10v-35h-15v-15h-20v-25h-10v-25h-18v-14h50v14h16v20h20v15h18v-20h-16zM1085 1528h15v32h-15zM1107 1540h15v15h-15zM1122 1560h28v25h-20v-12h-8zM1228 1500h10v30h-10zM1266 1520h22v20h-22zM1375 1490h8v12h-8z"/>
            <path d="M33 1460h20v12h30v10h26v10H73v-8H53v-10H33zM33 1495h15v8h10v8H40zM88 1535h26v10H88zM105 1580h30v-20h30v-12h22v14h8v60h-22v-4h-30v20h-8v-26h10v-12h10v-10h-22v10h-20zM33 1660h12v20h45v14H62v22H50v20H38v-20h8v-30H33zM124 1706h8v8h-8zM158 1744h8v10h-8z"/>
            <path d="M492 1655h30v-12h20v-34h44v45h18v20h10v40h-24v-8h-14v8h-30v-8h-22v6h-14v-24h-12v-20h-6zM420 1627h8v10h-8z"/>
            <path d="M920 1700h22v-16h10v-18h36v12h30v20h15v20h-22v14h-36v12h-20v18h-28v-30h8v-14h-15zM826 1790h8v-26h6v28h-14zM1030 1755h18v8h-18z"/>
            <path d="M160 1775h30v-24h28v14h20v20h-18v16h16v24h26v-12h28v8h28v-8h72v60h-12v24h10v20h8v20h30v10h30v28h-20v18h-38v24h-28v30h-66v-28h-10v-36h-70v-10h-50v-90h-10v-90h-4zM195 1885v35h20v-35zM398 1852h52v28h-30v16h10v20h-42v-30h10zM93 1910h26v-20h16v10h26v48h-26v18h-26v-12h10v-12h-20zM115 1840h14v10h-14zM145 1832h8v16h-8zM137 1860h16v10h-16zM45 1930h20v16H45zM174 1947h14v10h-14zM440 1978h30v8h-30zM210 1988h8v8h-8zM443 2000h14v6h-14zM665 2018h14v16h-14zM88 2046h20v20H88zM50 2172h8v8h-8zM188 2212h14v16h-14z" fill-rule="evenodd"/>
            <path d="M180 2250h30v-10h20v-10h14v14h8v8h8v16h-78zM388 2242h22v14h-10v10h-10zM862 2252h20v18h-20zM1087 2258h20v-8h20v8h14v8h-54z"/>
            <path d="M1107 1894h22v-4h28v34h-20v15h50v-4h30v12h20v20h16v14h22v20h-20v14h-18v15h-34v-8h-22v-12h-12v-16h-22v-20h-20v-35h-20zM1160 1864h34v10h36v8h28v8h-20v26h-24v-8h-20v-10h-34zM1062 1900h8v8h-8zM1288 2030h20v-12h32v10h6v18h-26v10h-30z"/>
            <path d="M1170 2100h14v-20h20v-14h40v20h18v12h40v24h50v-40h12v-20h38v-20h24v-10h30v-14h22v50h-22v-8h-30v12h28v28h12v42h12v130h-314v-28h-8v-10h14z"/>
            <path d="M1150 2180h8v20h-8zM1058 1745h8v8h-8z"/>
          </g>
          <path d="M1385 2220h32v35h-12l-6-18h-14z" fill="#d8ead0"/>
        </g>
      </svg>
    </section>
  </main>

  <footer class="status">
    <label class="locate"><svg><use href="#search"/></svg><input placeholder="Type to locate (Ctrl+K)" aria-label="Type to locate"></label>
    <span class="msg">Toggles the editing state of the current layer</span>
    <input class="coord" aria-label="Coordinate" value="4804°, 4.7321°">
    <svg class="ms"><use href="#mouse"/></svg>
    <label for="scale">Scale</label><select id="scale" class="sel scale"><option>1:73088</option></select>
    <svg class="lk"><use href="#lock"/></svg>
    <label for="mag" class="magl">Magnifier</label><span class="spin"><input id="mag" value="100%"><i class="ud"></i></span>
    <label for="rot" class="rotl">Rotation</label><span class="spin"><input id="rot" value="0.0 °"><i class="ud"></i></span>
    <label class="rend"><input type="checkbox" checked>Render</label>
    <button class="crs"><svg><use href="#globe"/></svg>EPSG:4326</button>
    <button class="crs bub" aria-label="Messages"><svg><use href="#bubble"/></svg></button>
  </footer>
</div>

<div class="dialog" role="dialog" aria-label="Layer Properties">
  <header><svg class="i24"><use href="#qgis"/></svg><span>Layer Properties - lcz_tiles — 3D View</span><button aria-label="Close"><svg viewBox="0 0 16 16"><path d="M1 1l14 14M15 1L1 15" stroke="#222" stroke-width="1.500"/></svg></button></header>
  <div class="dbody">
    <div class="side">
      <label class="find"><svg><use href="#search"/></svg><input aria-label="Search"></label>
      <div class="listwrap">
        <ul class="list">
          <li><svg><use href="#info"/></svg>Information</li>
          <li><svg><use href="#source"/></svg>Source</li>
          <li><svg><use href="#symb"/></svg>Symbology</li>
          <li><svg viewBox="0 0 36 36"><path d="M7 8h28v20H7L1 18z" fill="#fbe03c" stroke="#c9a20c" stroke-width="1.500"/><text x="8" y="23" class="abc a1">abc</text></svg>Labels</li>
          <li><svg viewBox="0 0 36 36"><path d="M2 9q7-5 11-3 4-5 8 0 12-1 14 6 1 13-4 15H5q-7-6-3-18z" fill="#e6ecfb"/><text x="2" y="23" class="abc a2">abc</text></svg>Masks</li>
          <li class="sel3"><svg><use href="#cube"/></svg>3D View</li>
          <li><svg><use href="#diag"/></svg>Diagrams</li>
          <li><svg><use href="#fields"/></svg>Fields</li>
          <li><svg><use href="#form"/></svg>Attributes Form</li>
          <li><svg><use href="#joins"/></svg>Joins</li>
          <li><svg><use href="#aux"/></svg>Auxiliary Storage</li>
          <li><svg><use href="#actions"/></svg>Actions</li>
          <li><svg><use href="#display"/></svg>Display</li>
          <li><svg><use href="#brush"/></svg>Rendering</li>
          <li><svg><use href="#clock"/></svg>Temporal</li>
          <li><svg viewBox="0 0 36 36"><text x="4" y="31" class="eps e2">ε</text></svg>Variables</li>
          <li><svg><use href="#elev"/></svg>Elevation</li>
          <li><svg><use href="#meta"/></svg>Metadata</li>
          <li><svg><use href="#deps"/></svg>Dependencies</li>
        </ul>
        <div class="vscroll"><span class="sb top"><i class="upa"></i></span><span class="track"></span><span class="thumb"></span><span class="sb"><i class="dn"></i></span></div>
      </div>
    </div>
    <div class="pane">
      <i class="handle"></i>
      <div class="combo"><svg><use href="#nosym"/></svg><select class="sel" aria-label="Symbols"><option>No Symbols</option></select></div>
      <div class="blank"></div>
      <h3><i class="big"></i>Layer Rendering</h3>
      <div class="box">
        <div class="frow"><label for="zl">Zoom levels count</label><span class="spin wide"><input id="zl" value="3"><i class="ud"></i></span></div>
        <label class="crow"><input type="checkbox">Show bounding boxes of tiles</label>
      </div>
      <div class="btns"><button class="btn style">Style<i class="dn"></i></button><button class="btn">OK</button><button class="btn">Cancel</button><button class="btn">Apply</button><button class="btn">Help</button></div>
    </div>
  </div>
</div>
<div class="menu" role="menu">
  <button class="act">Load Style...</button><button>Save Style...</button><hr>
  <button>Save as Default</button><button>Restore Default</button><hr>
  <button>Add...</button><button>Rename Current...</button><hr>
  <button class="dis"><i></i>default</button>
</div>
</body>
</html>
```
FILE: styles.css
```css
* { box-sizing: border-box; }
body { margin: 0; background: #fff; font: 16px/20px "Open Sans", "Noto Sans", sans-serif; color: #111; position: relative; min-height: 100vh; overflow: hidden; }
button, input, select { font: inherit; color: inherit; margin: 0; padding: 0; border: 0; background: none; border-radius: 0; outline: none; }
svg { display: block; flex: none; }
.sprite { position: absolute; width: 0; height: 0; }
.i24 { width: 24px; height: 24px; }
.eps { font-family: "Liberation Serif", serif; font-weight: 700; fill: #643872; }
.e1 { font-size: 25px; }
.e2 { font-size: 52px; }
.e3 { font-size: 30px; fill: #888; }
.q { font: 27px "Liberation Serif", serif; fill: #fff; }
.abc { font-family: "Liberation Sans", sans-serif; font-weight: 700; fill: #222; }
.a1 { font-size: 14px; }
.a2 { font-size: 18px; }

.win { height: calc(100vh - 182px); display: flex; flex-direction: column; background: #efefef; border-bottom: 3px solid #2a2a2c; border-right: 1px solid #999; border-radius: 8px 8px 6px 6px; overflow: hidden; }
.titlebar { flex: none; height: 41px; background: #f3f3f3; display: flex; align-items: center; padding: 0 24px 4px 9px; gap: 7px; color: #8a8a8a; font-size: 17px; }
.winbtns { margin-left: auto; display: flex; gap: 54px; }
.winbtns button, .dialog header button { width: 16px; height: 16px; }
.winbtns svg, .dialog header button svg { width: 16px; height: 16px; }
.menubar { flex: none; height: 31px; display: flex; align-items: center; gap: 22px; padding: 2px 0 0 14px; border-bottom: 2px solid #ccc; font-size: 17px; }
.menubar a { color: #9a9a9a; text-decoration: none; }

.row { flex: none; display: flex; gap: 1px; }
.r1, .r2 { height: 58px; }
.r3 { height: 75px; }
.r4 { height: 58px; }
.tbar { flex: none; display: flex; align-items: center; gap: 13px; padding: 4px 4px 0 8px; border-bottom: 2px solid #b4b4b4; background: linear-gradient(#fafafa, #eeeeee); overflow: hidden; }
.tbar.grow { flex: 1; padding-left: 4px; }
.w160 { width: 160px; padding-left: 0; gap: 3px; }
.w93 { width: 93px; gap: 11px; }
.w444 { width: 443px; padding-left: 7px; }
.wr { padding-left: 4px; }
.w164 { width: 164px; padding-left: 6px; }
.w73 { width: 72px; padding-left: 6px; }
.w536 { width: 536px; }
.w92 { width: 91px; gap: 10px; }
.w118 { width: 118px; padding-left: 0; padding-right: 0; }
.w464 { width: 464px; }
.w111 { width: 110px; padding-left: 7px; }
.grip { flex: none; width: 8px; height: 26px; background-image: radial-gradient(circle, #aaa 1px, transparent 1px); background-size: 5px 5px; }
.tb { flex: none; display: flex; align-items: center; gap: 7px; }
.tb svg { width: 36px; height: 36px; }
.tb svg.wide { width: 40px; }
.dn, .upa, .big { flex: none; width: 0; height: 0; border: 6px solid transparent; border-top: 7px solid #555; border-bottom: 0; }
.upa { border-bottom: 7px solid #555; border-top: 0; }
h3 .big { border-width: 10px 8px 0; border-top-color: #333; }
.off .tb, .faded { opacity: .42; filter: saturate(.35); }
.off .tb.on { opacity: 1; filter: none; }
.more { margin-left: auto; width: 16px; text-align: center; font-size: 24px; color: #444; }
.more.up { align-self: flex-start; padding-top: 16px; }
.tgl { flex: none; height: 46px; background: #d2d2d2; border: 1px solid #adadad; border-radius: 3px; display: flex; align-items: center; justify-content: center; }
.tgl svg { width: 36px; height: 36px; }
.t22 { width: 22px; }
.tgl.t22 svg { width: 20px; }
.t16 { width: 18px; }
.t46 { width: 46px; }
.tight { gap: 3px; }
.wd { width: 18px; height: 16px; }
.icons { display: flex; gap: 14px; margin-left: 4px; }
.spin { flex: none; display: flex; height: 33px; border: 1px solid #aaa; border-radius: 3px; background: #fff; overflow: hidden; }
.spin input { width: 103px; padding-left: 6px; }
.spin .sp1 { width: 52px; }
.spin.dis, .units { color: #777; }
.spin.dis { background: #f3f3f3; }
.ud { width: 20px; border-left: 1px solid #aaa; background: #f4f4f4; display: flex; flex-direction: column; align-items: center; justify-content: center; gap: 5px; }
.ud::before, .ud::after { content: ""; border: 6px solid transparent; border-bottom: 7px solid #555; border-top: 0; }
.ud::after { border-top: 7px solid #555; border-bottom: 0; }
.dis .ud::before, .dis .ud::after { opacity: .5; }
.sel { appearance: none; opacity: 1; height: 33px; border: 1px solid #aaa; border-radius: 3px; padding-left: 5px; background: linear-gradient(45deg, transparent 50%, #666 50%) calc(100% - 17px) 50% / 7px 7px no-repeat, linear-gradient(-45deg, transparent 50%, #666 50%) calc(100% - 11px) 50% / 7px 7px no-repeat, linear-gradient(#fdfdfd, #ececec); }
.units { width: 129px; }

.main { flex: 1; min-height: 0; display: flex; }
.dock { flex: none; width: 406px; display: flex; flex-direction: column; background: #efefef; }
.dock h2 { margin: 0; font: inherit; height: 36px; padding: 9px 5px 0; flex: none; }
.dock .h2b { height: 35px; padding-top: 7px; }
.ptools { flex: none; height: 42px; display: flex; align-items: center; gap: 14px; padding: 0 10px 6px; border-bottom: 1px solid #b0b0b0; }
.ptools svg { width: 24px; height: 24px; }
.ptools .inf { width: 22px; }
.ptools .dn { margin-left: -6px; }
.tree { background: #fff; margin-left: 1px; overflow: hidden; font-size: 17px; }
.layers { flex: 1; font-size: 16px; }
.trow { height: 27px; display: flex; align-items: center; gap: 10px; white-space: nowrap; }
.hl { background: #efefef; }
.exp { width: 25px; display: flex; justify-content: center; }
.trow svg { width: 22px; height: 22px; }
.swatch { width: 24px; height: 23px; background: #e15989; border: 1px solid #8c3a57; margin-right: -2px; }
.ul { text-decoration: underline; text-underline-offset: 3px; }
.split { flex: none; height: 10px; margin-left: 186px; width: 30px; background: radial-gradient(circle, #aaa 1px, transparent 1px) 0 0 / 5px 10px; }
.browse { flex: none; height: 182px; padding-top: 2px; }
.deep { padding-left: 80px; }
.mid { padding-left: 56px; }
.rt, .lt { width: 8px; height: 0; border: 6px solid transparent; border-left: 7px solid #555; border-right: 0; margin-right: 3px; }
.rt.none { border-left-color: transparent; }
.lt { border-left: 0; border-right: 7px solid #444; margin: 0; }
.hscroll { width: 20px; height: 20px; border: 1px solid #ccc; display: flex; align-items: center; justify-content: center; background: #f6f6f6; }
.tabs { flex: none; display: flex; height: 37px; align-items: flex-start; }
.tabs button { height: 33px; padding: 2px 15px 0; background: #e0e0e0; border: 1px solid #b5b5b5; }
.tabs .cur { height: 35px; background: #efefef; border-top: 0; border-radius: 0 0 3px 3px; padding: 2px 17px 0; }
.canvas { flex: 1; min-width: 0; border-top: 1px solid #b4b4b4; border-bottom: 1px solid #aaa; padding-top: 2px; overflow: hidden; }
.canvas svg { width: 100%; height: 100%; }
.m * { vector-effect: non-scaling-stroke; }
.m .lines { opacity: .22; filter: brightness(1.1); }
.lbl text { font: 12px "Noto Sans", sans-serif; fill: #444; paint-order: stroke; stroke: #ffffffaa; stroke-width: 2px; }
.lbl .big { font-size: 16px; }
.lbl .mid { font-size: 14px; }
.lbl .it, .lbl .wat text, .lbl .nat text { font-style: italic; }
.lbl .wat text { fill: #6e96d0; }
.lbl .nat text { fill: #2e9b3c; font-weight: 600; }
.lbl .nat .lt2 { fill: #4fa870; font-size: 11px; }
.lbl .adm text { fill: #8d6aa5; font-size: 11px; }
.lbl .ref rect { fill: #f2f0cf; stroke: #c9c69a; }
.lbl .ref text { stroke: none; fill: #555a2c; font-size: 11px; }
.lbl .o rect { fill: #f6dcc0; stroke: #dba987; }
.lbl .r rect { fill: #f3c9ce; stroke: #d78c98; }

.status { flex: none; height: 41px; display: flex; align-items: center; padding: 2px 44px 0 5px; gap: 7px; }
.locate { width: 300px; height: 33px; border: 1px solid #aaa; border-radius: 3px; background: #fff; display: flex; align-items: center; gap: 10px; padding-left: 13px; }
.locate svg { width: 20px; height: 20px; }
.locate input { flex: 1; }
.locate input::placeholder { color: #888; opacity: 1; }
.msg { margin-left: 5px; margin-right: auto; }
.coord { width: 170px; height: 33px; border: 1px solid #aaa; border-radius: 3px; background: #f6f6f6; text-align: right; padding-right: 11px; }
.ms { width: 24px; height: 26px; margin-right: 12px; }
.scale { width: 120px; }
.lk { width: 20px; height: 24px; margin: 0 5px 0 10px; }
.magl { margin-right: -2px; }
.rotl { margin-left: 7px; }
.rend { display: flex; align-items: center; gap: 8px; margin-left: 3px; }
.crs { display: flex; align-items: center; gap: 2px; margin-left: 16px; }
.crs svg { width: 24px; height: 24px; }
.status .bub { margin-left: 28px; }
input[type=checkbox] { appearance: none; flex: none; width: 20px; height: 20px; background: #fff; border: 1px solid #aaa; display: grid; place-items: center; }
input[type=checkbox]:checked::after { content: ""; width: 12px; height: 14px; background: #111; clip-path: polygon(0 52%, 22% 45%, 42% 72%, 80% 0, 100% 0, 50% 100%, 34% 100%); }

.dialog { position: absolute; left: 216px; top: 28px; width: calc(100% - 905px); height: calc(100vh - 287px); display: flex; flex-direction: column; background: #efefef; border-radius: 10px; outline: 1px solid #a2a2a2; box-shadow: 0 12px 50px 8px rgba(0, 0, 0, .38); overflow: hidden; }
.dialog header { flex: none; height: 44px; background: #f3f3f3; display: flex; align-items: center; gap: 5px; padding: 0 16px 0 11px; font-size: 17px; }
.dialog header button { margin-left: auto; }
.dbody { flex: 1; min-height: 0; display: flex; }
.side { flex: none; width: 530px; display: flex; flex-direction: column; background: #5c5c5c; }
.find { flex: none; height: 33px; margin-right: 1px; background: #fff; border: 1px solid #999; display: flex; align-items: center; padding-left: 12px; }
.find svg { width: 20px; height: 20px; }
.listwrap { flex: 1; min-height: 0; margin-top: 9px; display: flex; }
.list { flex: 1; margin: 0; padding: 0; list-style: none; overflow: hidden; color: #f4f4f4; font-size: 17px; }
.list li { height: 54px; display: flex; align-items: center; gap: 11px; padding: 1px 0 0 8px; }
.list svg { width: 36px; height: 38px; }
.list .sel3 { background: #efefef; color: #111; padding-left: 12px; }
.vscroll { width: 21px; display: flex; flex-direction: column; background: linear-gradient(90deg, #fff, #efefef); }
.sb { height: 22px; display: flex; align-items: center; justify-content: center; }
.sb.top { height: 20px; border-bottom: 1px solid #bbb; }
.track { flex: 1; }
.thumb { height: 178px; background: #e4e4e4; border: 1px solid #bbb; }
.pane { position: relative; flex: 1; min-width: 0; display: flex; flex-direction: column; padding: 5px 5px 5px 6px; }
.combo { flex: none; display: flex; align-items: center; height: 35px; border: 1px solid #aaa; border-radius: 4px; background: linear-gradient(#fefefe, #ebebeb); padding-left: 11px; gap: 5px; }
.combo svg { width: 20px; height: 24px; }
.combo .sel { flex: 1; border: 0; padding-left: 0; height: 31px; background: linear-gradient(45deg, transparent 50%, #555 50%) calc(100% - 16px) 50% / 7px 7px no-repeat, linear-gradient(-45deg, transparent 50%, #555 50%) calc(100% - 10px) 50% / 7px 7px no-repeat; }
.blank { flex: 1; }
.handle { position: absolute; left: 1px; top: 49%; width: 3px; height: 26px; background: radial-gradient(circle, #aaa 1px, transparent 1px) 0 0 / 3px 5px; }
.pane h3 { margin: 0; height: 32px; font-size: 16px; display: flex; align-items: center; gap: 12px; padding-left: 4px; }
.box { height: 104px; border: 1px solid #dadada; background: #ececec; padding: 16px 17px; display: flex; flex-direction: column; gap: 16px; }
.frow { display: flex; align-items: center; height: 28px; justify-content: space-between; }
.spin.wide { width: 325px; height: 30px; }
.spin.wide input { flex: 1; width: auto; }
.crow { display: flex; align-items: center; gap: 7px; }
.btns { margin-top: 10px; display: flex; gap: 10px; }
.btn { width: 119px; height: 32px; padding-top: 1px; border: 1px solid #aaa; border-radius: 3px; background: linear-gradient(#fefefe, #f0f0f0); }
.btn.style { margin-right: auto; background: #cfd5da; border-color: #4ca9f0; display: flex; align-items: center; justify-content: center; gap: 32px; padding-left: 25px; }
.btn .dn { border-width: 5px 5px 0; }

.menu { position: absolute; left: 752px; top: 1123px; width: 267px; background: #fff; border: 2px solid #929292; border-right-color: #777; display: flex; flex-direction: column; box-shadow: 1px 1px 0 #333; font-size: 17px; }
.menu button { height: 36px; padding: 1px 0 0 40px; text-align: left; display: flex; align-items: center; }
.menu .act { background: #0078d7; color: #fff; outline: 2px solid #44a8f5; }
.menu hr { margin: 0 6px 1px; border: 0; height: 2px; background: #c8c8c8; width: auto; }
.menu .dis { color: #777; padding-left: 16px; gap: 15px; height: 34px; }
.menu .dis i { width: 9px; height: 9px; border-radius: 50%; background: #666; }
```
